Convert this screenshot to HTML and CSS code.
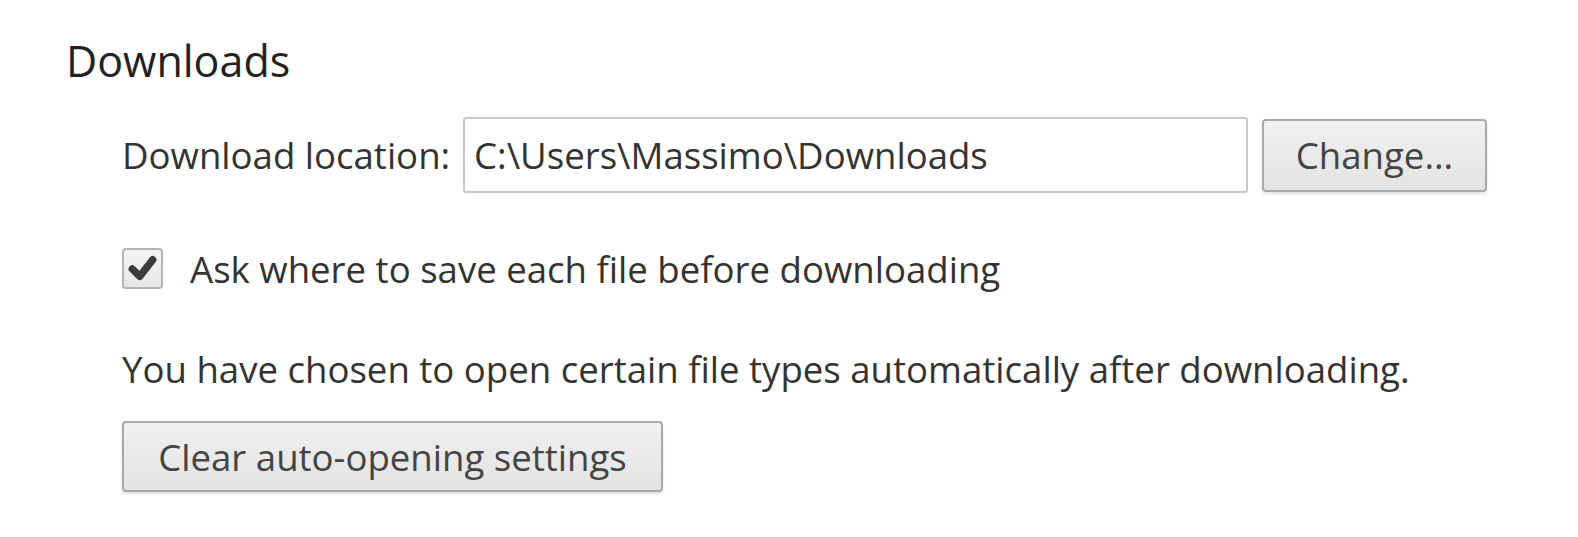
FILE: index.html
```html
<!DOCTYPE html>
<html>
<head>
<meta charset="utf-8">
<link rel="stylesheet" href="styles.css">
</head>
<body>
<section class="section">
  <h3 class="section-title">Downloads</h3>
  <div class="section-body">
    <div class="location-row">
      <span class="label">Download location:</span>
      <div class="path-input">C:\Users\Massimo\Downloads</div>
      <button class="btn change-btn">Change...</button>
    </div>
    <label class="check-row">
      <span class="checkbox">
        <svg viewBox="0 0 40 40" width="40" height="40"><path d="M9 20 L17 28 L31 10" fill="none" stroke="#3c3c3c" stroke-width="8" stroke-linecap="round" stroke-linejoin="round"/></svg>
      </span>
      <span class="check-text">Ask where to save each file before downloading</span>
    </label>
    <p class="note">You have chosen to open certain file types automatically after downloading.</p>
    <button class="btn clear-btn">Clear auto-opening settings</button>
  </div>
</section>
</body>
</html>
```
FILE: styles.css
```css
html, body {
  margin: 0;
  padding: 0;
  background: #ffffff;
}
body {
  font-family: "Open Sans", "Noto Sans", "Liberation Sans", sans-serif;
  color: #333333;
  width: 1578px;
  height: 537px;
  overflow: hidden;
}
.section {
  padding: 34px 0 0 66px;
}
.section-title {
  margin: 0;
  font-size: 43px;
  font-weight: 400;
  line-height: 54px;
  color: #222222;
}
.section-body {
  padding-left: 56px;
  padding-top: 28px;
  font-size: 36.6px;
}
.location-row {
  display: flex;
  align-items: center;
  height: 78px;
}
.label {
  width: 341px;
  flex: none;
}
.path-input {
  box-sizing: border-box;
  width: 785px;
  height: 76px;
  border: 2px solid #c8c8c8;
  border-radius: 3px;
  padding-left: 9px;
  display: flex;
  align-items: center;
  color: #333333;
  flex: none;
}
.btn {
  box-sizing: border-box;
  font-family: inherit;
  font-size: 36.6px;
  color: #444444;
  background: linear-gradient(#f0f0f0, #e3e3e3);
  border: 2px solid #a8a8a8;
  border-radius: 4px;
  box-shadow: 0 2px 3px rgba(0,0,0,0.12);
  padding: 0;
  flex: none;
}
.change-btn {
  margin-left: 14px;
  width: 225px;
  height: 73px;
}
.check-row {
  display: flex;
  align-items: center;
  margin-top: 54px;
  height: 41px;
}
.checkbox {
  box-sizing: border-box;
  width: 41px;
  height: 41px;
  border: 2px solid #b4b4b4;
  border-radius: 4px;
  background: linear-gradient(#f4f4f4, #e6e6e6);
  display: flex;
  align-items: center;
  justify-content: center;
  flex: none;
}
.checkbox svg {
  display: block;
}
.check-text {
  margin-left: 27px;
}
.note {
  margin: 57px 0 0 0;
  line-height: 46px;
}
.clear-btn {
  margin-top: 29px;
  width: 541px;
  height: 71px;
}
```
